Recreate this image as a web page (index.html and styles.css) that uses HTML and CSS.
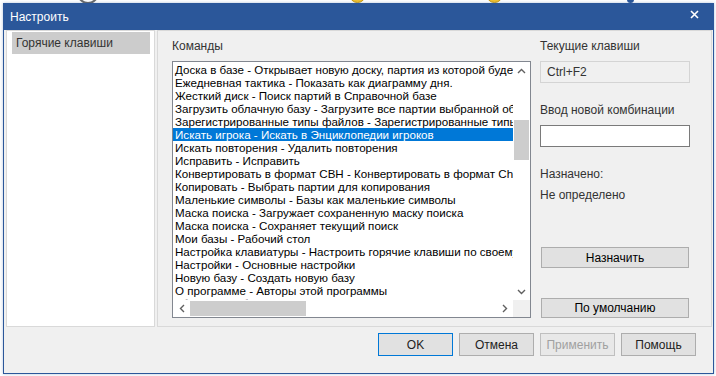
FILE: index.html
```html
<!DOCTYPE html>
<html lang="ru">
<head>
<meta charset="utf-8">
<title>Настроить</title>
<link rel="stylesheet" href="styles.css">
</head>
<body>
<div class="desk">
  <span class="deco deco-gray"></span>
  <span class="deco deco-yellow deco-y1"></span>
  <span class="deco deco-yellow deco-y2"></span>
  <span class="deco deco-blue"></span>
  <div class="dialog">
    <div class="titlebar">
      <span class="title">Настроить</span>
      <svg class="close" width="9" height="9" viewBox="0 0 9 9"><path d="M1 1 L8 8 M8 1 L1 8" stroke="#ffffff" stroke-width="1.6" fill="none"/></svg>
    </div>
    <div class="content">
      <div class="panels">
        <div class="nav">
          <div class="nav-item">Горячие клавиши</div>
        </div>
        <div class="main">
          <div class="cmd-col">
            <div class="label">Команды</div>
            <div class="listbox">
              <div class="rows">
                <div class="row">Доска в базе - Открывает новую доску, партия из которой будет загружена</div>
                <div class="row">Ежедневная тактика - Показать как диаграмму дня.</div>
                <div class="row">Жесткий диск - Поиск партий в Справочной базе</div>
                <div class="row">Загрузить облачную базу - Загрузите все партии выбранной облачной базы</div>
                <div class="row">Зарегистрированные типы файлов - Зарегистрированные типы файлов</div>
                <div class="row sel">Искать игрока - Искать в Энциклопедии игроков</div>
                <div class="row">Искать повторения - Удалить повторения</div>
                <div class="row">Исправить - Исправить</div>
                <div class="row">Конвертировать в формат CBH - Конвертировать в формат ChessBase</div>
                <div class="row">Копировать - Выбрать партии для копирования</div>
                <div class="row">Маленькие символы - Базы как маленькие символы</div>
                <div class="row">Маска поиска - Загружает сохраненную маску поиска</div>
                <div class="row">Маска поиска - Сохраняет текущий поиск</div>
                <div class="row">Мои базы - Рабочий стол</div>
                <div class="row">Настройка клавиатуры - Настроить горячие клавиши по своему вкусу</div>
                <div class="row">Настройки - Основные настройки</div>
                <div class="row">Новую базу - Создать новую базу</div>
                <div class="row">О программе - Авторы этой программы</div>
                <div class="row">обновить - обновить окна</div>
              </div>
              <div class="vscroll">
                <div class="arrow"><svg width="9" height="6" viewBox="0 0 9 6"><path d="M1 5 L4.5 1.5 L8 5" stroke="#606060" stroke-width="1.4" fill="none"/></svg></div>
                <div class="vtrack"><div class="vthumb"></div></div>
                <div class="arrow"><svg width="9" height="6" viewBox="0 0 9 6"><path d="M1 1 L4.5 4.5 L8 1" stroke="#606060" stroke-width="1.4" fill="none"/></svg></div>
              </div>
              <div class="hscroll">
                <div class="arrow"><svg width="6" height="9" viewBox="0 0 6 9"><path d="M5 1 L1.5 4.5 L5 8" stroke="#606060" stroke-width="1.4" fill="none"/></svg></div>
                <div class="hthumb"></div>
                <div class="htrack"></div>
                <div class="arrow"><svg width="6" height="9" viewBox="0 0 6 9"><path d="M1 1 L4.5 4.5 L1 8" stroke="#606060" stroke-width="1.4" fill="none"/></svg></div>
              </div>
              <div class="corner"></div>
            </div>
          </div>
          <div class="side">
            <div class="label">Текущие клавиши</div>
            <div class="keybox">Ctrl+F2</div>
            <div class="label gap-lg">Ввод новой комбинации</div>
            <div class="inputbox"></div>
            <div class="label gap-lg">Назначено:</div>
            <div class="label gap-sm">Не определено</div>
            <button class="btn btn-side btn-assign">Назначить</button>
            <button class="btn btn-side btn-default">По умолчанию</button>
          </div>
        </div>
      </div>
      <div class="footer">
        <button class="btn btn-foot btn-ok">OK</button>
        <button class="btn btn-foot">Отмена</button>
        <button class="btn btn-foot btn-disabled">Применить</button>
        <button class="btn btn-foot">Помощь</button>
      </div>
    </div>
  </div>
</div>
</body>
</html>
```
FILE: styles.css
```css
* { box-sizing: border-box; }
html, body { margin: 0; padding: 0; }
body {
  width: 716px;
  height: 376px;
  overflow: hidden;
  background: #ffffff;
  font-family: "Liberation Sans", Arial, sans-serif;
  font-size: 12px;
  color: #000;
}
.desk {
  position: relative;
  width: 716px;
  height: 376px;
  padding: 3px 2px 2px 3px;
}
.deco { position: absolute; border-radius: 50%; }
.deco-gray { left: 77px; top: -18px; width: 22px; height: 22px; border: 2px solid #6a6a6a; }
.deco-yellow { top: -14px; width: 17px; height: 17px; background: #f2c230; border: 1px solid #c89a10; }
.deco-y1 { left: 349px; }
.deco-y2 { left: 486px; }
.deco-blue { left: 627px; top: -4px; width: 7px; height: 7px; background: #2b579a; }

.dialog {
  position: relative;
  z-index: 1;
  width: 711px;
  height: 371px;
  border: 1px solid #2b579a;
  display: flex;
  flex-direction: column;
  box-shadow: 0 0 3px rgba(43, 87, 154, 0.35);
}
.titlebar {
  height: 26px;
  background: #2b579a;
  color: #fff;
  display: flex;
  align-items: flex-start;
  justify-content: space-between;
  padding: 0 14px 0 6px;
  flex: none;
}
.title { line-height: 15px; margin-top: 6px; font-size: 12px; }
.close { margin-top: 6px; }

.content {
  flex: 1;
  background: #f0f0f0;
  display: flex;
  flex-direction: column;
}
.panels {
  height: 297px;
  display: flex;
  gap: 2px;
  padding: 0 1px 0 2px;
  flex: none;
}
.nav {
  width: 149px;
  background: #fff;
  border: 1px solid #d9d9d9;
  padding: 1px 4px 0 5px;
}
.nav-item {
  height: 22px;
  background: #cccccc;
  color: #333;
  padding-left: 4px;
  line-height: 22px;
}
.main {
  flex: 1;
  border: 1px solid #d9d9d9;
  display: flex;
  gap: 9px;
  padding: 8px 0 0 14px;
}
.label {
  line-height: 15px;
  height: 15px;
  color: #333;
  white-space: nowrap;
}
.cmd-col { width: 359px; display: flex; flex-direction: column; }
.cmd-col .label { margin-bottom: 7px; }
.listbox {
  width: 359px;
  height: 257px;
  border: 1px solid #828790;
  background: #fff;
  display: grid;
  grid-template-columns: 340px 17px;
  grid-template-rows: 238px 17px;
}
.rows {
  overflow: hidden;
  padding-top: 1px;
  font-size: 11.6px;
}
.row {
  height: 13px;
  line-height: 12px;
  padding: 1px 0 0 2px;
  white-space: nowrap;
  overflow: hidden;
}
.row.sel { background: #0078d7; color: #fff; }
.vscroll {
  display: flex;
  flex-direction: column;
  background: #fff;
}
.arrow {
  width: 17px;
  height: 17px;
  flex: none;
  display: flex;
  align-items: center;
  justify-content: center;
}
.vtrack { flex: 1; padding: 41px 1px 0 1px; }
.vthumb { height: 40px; background: #cdcdcd; }
.hscroll {
  display: flex;
  align-items: stretch;
  background: #fff;
}
.hthumb { width: 116px; margin: 1px 0; background: #cdcdcd; flex: none; }
.htrack { flex: 1; }
.corner { background: #f0f0f0; }

.side { width: 150px; display: flex; flex-direction: column; }
.keybox {
  margin-top: 7px;
  height: 22px;
  border: 1px solid #d4d4d4;
  background: #f0f0f0;
  color: #333;
  padding-left: 6px;
  line-height: 20px;
}
.inputbox {
  margin-top: 7px;
  height: 22px;
  border: 1px solid #7a7a7a;
  background: #fff;
}
.gap-lg { margin-top: 20px; }
.gap-sm { margin-top: 6px; }
.btn {
  font-family: "Liberation Sans", Arial, sans-serif;
  font-size: 12px;
  color: #000;
  background: #e1e1e1;
  border: 1px solid #adadad;
  padding: 0;
  margin: 0;
}
.btn-side { margin-left: 1px; width: 148px; }
.btn-assign { margin-top: 44px; height: 21px; }
.btn-default { margin-top: 30px; height: 20px; }

.footer {
  flex: 1;
  display: flex;
  justify-content: flex-end;
  gap: 6px;
  padding: 6px 17px 0 0;
}
.btn-foot { width: 75px; height: 23px; color: #222; }
.btn-ok { border-color: #0078d7; }
.btn-disabled { color: #a0a0a0; border-color: #bfbfbf; background: #e8e8e8; }
```
